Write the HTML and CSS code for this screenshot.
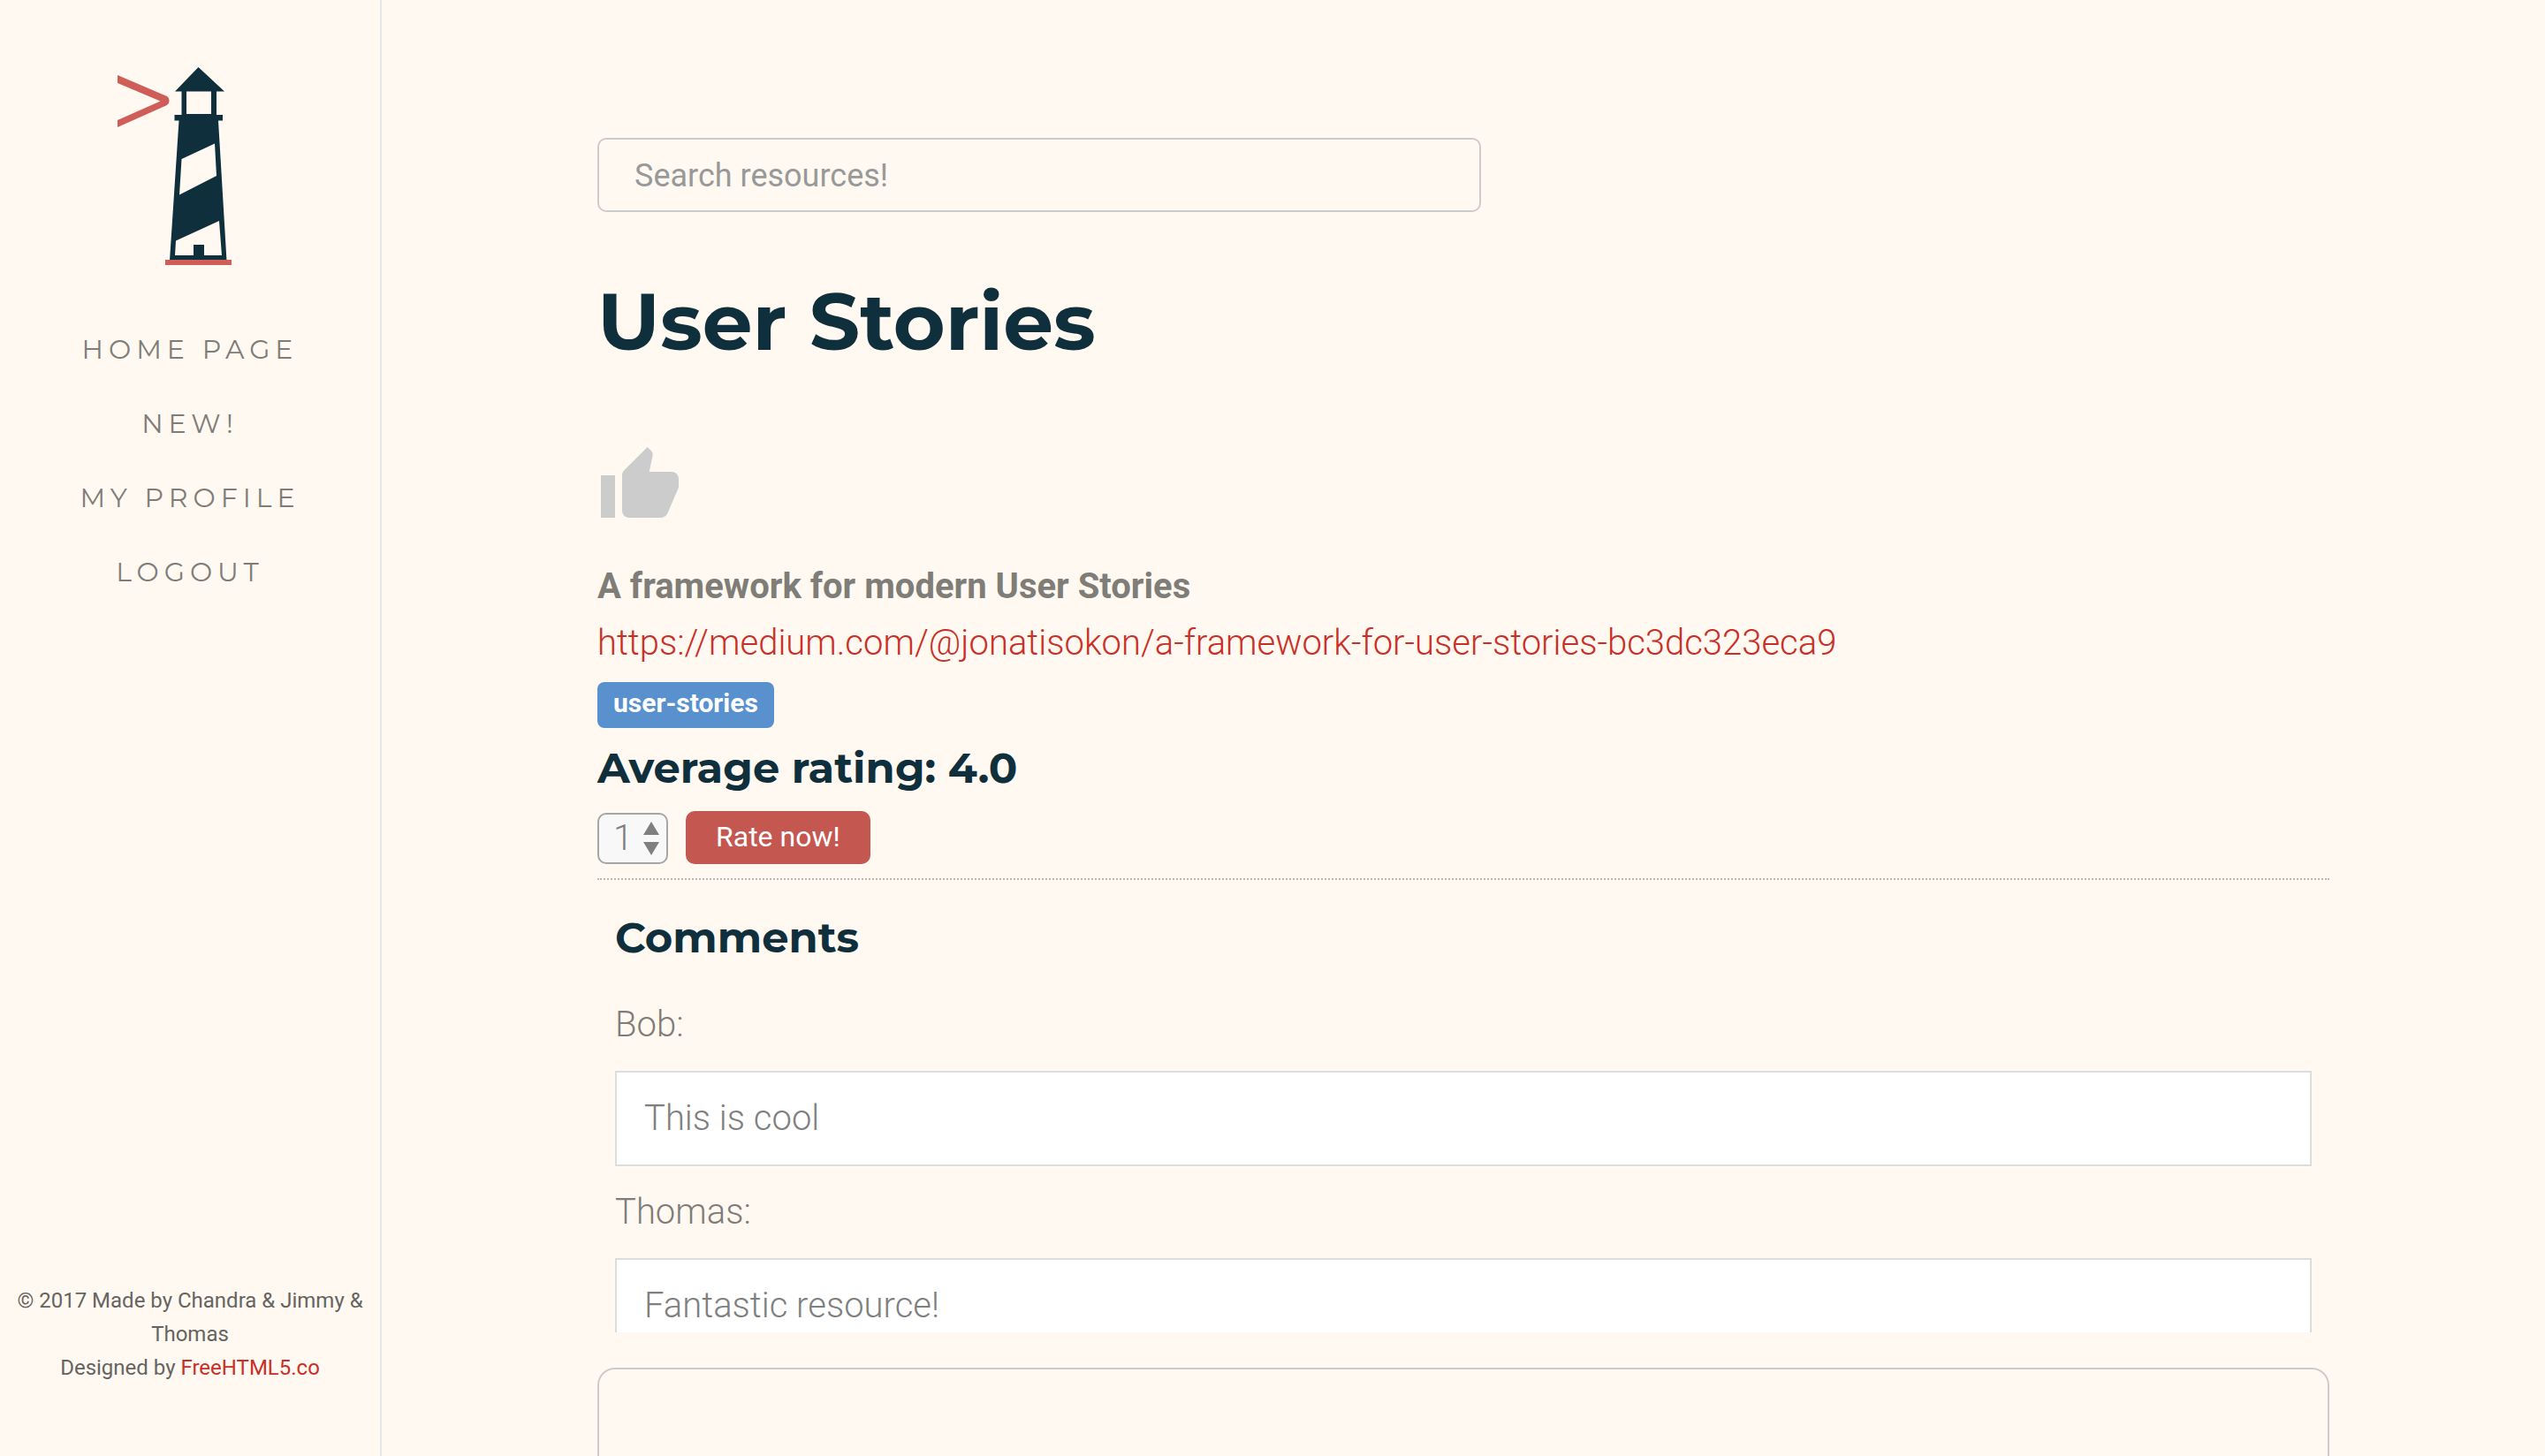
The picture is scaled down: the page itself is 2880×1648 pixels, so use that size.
FILE: index.html
```
<!DOCTYPE html>
<html lang="en">
<head>
<meta charset="utf-8">
<title>User Stories</title>
<link rel="stylesheet" href="styles.css">
</head>
<body>
<div class="page">
  <aside class="sidebar">
    <a class="logo" href="#" aria-label="Home">
      <svg viewBox="0 0 144 236" width="144" height="236" aria-hidden="true">
        <path fill="#cf5d58" d="M5 10 61 34Q63.500 35.500 63.500 39T61 44L5 69V61L53.500 39.500 5 19Z"/>
        <path fill="#0f2f3c" fill-rule="evenodd" d="M96.500 1 126 28.500H117V55h7v6.500h-5L128.500 220H64L74.500 61.500h-5V55h8V28.500H70ZM83 28.500V54h28V28.500ZM115 87.500 77.500 105 75 145.500 117 124ZM120 175 71 197.500 70 214H91V202h12v12h20Z"/>
        <path fill="#cf5d58" d="M59 219h75v6H59z"/>
      </svg>
    </a>
    <nav>
      <ul class="menu">
        <li><a href="#">Home page</a></li>
        <li><a href="#">New!</a></li>
        <li><a href="#">My profile</a></li>
        <li><a href="#">Logout</a></li>
      </ul>
    </nav>
    <footer class="credits">
      <p>© 2017 Made by Chandra &amp; Jimmy &amp; Thomas</p>
      <p>Designed by <a href="#">FreeHTML5.co</a></p>
    </footer>
  </aside>
  <main class="main">
    <form class="search"><input type="text" class="search-box" placeholder="Search resources!" aria-label="Search resources"></form>
    <h1>User Stories</h1>
    <button type="button" class="like" aria-label="Like">
      <svg viewBox="0 0 24 24" width="96" height="96" aria-hidden="true"><path fill="#ccc" d="M1 21h4V9H1v12zm22-11c0-1.100-.9-2-2-2h-6.310l.95-4.570.03-.32c0-.41-.17-.79-.44-1.060L14.170 1 7.590 7.590C7.220 7.950 7 8.450 7 9v10c0 1.100.9 2 2 2h9c.83 0 1.540-.5 1.840-1.220l3.020-7.050c.09-.23.14-.47.14-.73v-2z"/></svg>
    </button>
    <p class="title">A framework for modern User Stories</p>
    <p class="url"><a href="#">https://medium.com/@jonatisokon/a-framework-for-user-stories-bc3dc323eca9</a></p>
    <div class="tags"><span class="tag">user-stories</span></div>
    <h2>Average rating: 4.0</h2>
    <form class="rating">
      <span class="picker">
        <select class="score" aria-label="Rating"><option>1</option><option>2</option><option>3</option><option>4</option><option>5</option></select>
        <svg class="arrows" viewBox="0 0 18 38" width="18" height="38" aria-hidden="true"><path fill="#7f7f7f" d="M9 0 18 15H0zM0 23h18L9 38z"/></svg>
      </span>
      <button type="button" class="rate">Rate now!</button>
    </form>
    <section class="comments">
      <h2>Comments</h2>
      <article class="comment"><p class="author">Bob:</p><p class="text">This is cool</p></article>
      <article class="comment"><p class="author">Thomas:</p><p class="text">Fantastic resource!</p></article>
    </section>
    <textarea class="reply" aria-label="Add a comment"></textarea>
  </main>
</div>
</body>
</html>
```
FILE: styles.css
```
* { box-sizing: border-box; }
body {
  margin: 0;
  background: #fff9f1;
  color: #7f7d78;
  font: 300 40px/64px Roboto, sans-serif;
}
p, h1, h2, ul { margin: 0; padding: 0; }
a { color: #c92f27; text-decoration: none; }
button, input, select, textarea { font-family: inherit; margin: 0; }

.page { display: flex; height: 100vh; }

.sidebar {
  flex: 0 0 15%;
  display: flex;
  flex-direction: column;
  align-items: center;
  padding: 75px 16px 81px;
  border-right: 2px solid #e6e6e6;
}
.logo { display: block; height: 236px; margin-right: 30px; }
.logo svg { display: block; }
.menu { list-style: none; margin-top: 40px; text-align: center; }
.menu li { height: 84px; line-height: 84px; }
.menu a {
  color: #7f7d78;
  font-family: Montserrat, Inter, sans-serif;
  font-size: 30px;
  font-weight: 400;
  letter-spacing: 6px;
  text-transform: uppercase;
}
.credits {
  margin-top: auto;
  text-align: center;
  color: #666461;
  font-size: 24px;
  font-weight: 400;
  line-height: 38px;
}

.main {
  flex: 1;
  min-width: 0;
  padding: 156px 244px 80px;
  overflow-y: auto;
  scrollbar-width: none;
}
h1, h2 { font-family: Montserrat, Inter, sans-serif; font-weight: 700; color: #0f2f3c; }
h1 { font-size: 90px; line-height: 120px; margin-top: 64px; }
h2 { font-size: 48px; line-height: 64px; }

.search { display: flex; }
.search-box {
  width: 51%;
  height: 84px;
  padding: 2px 40px 0;
  border: 2px solid #ccc;
  border-radius: 10px;
  background: transparent;
  font-size: 36px;
  color: #7f7d78;
}
.search-box::placeholder { color: #999; opacity: 1; }

.like { display: block; margin-top: 78px; padding: 0; border: 0; background: none; }
.like svg { display: block; }
.title { margin-top: 34px; font-weight: 700; }
.tags { display: flex; margin-top: 12px; }
.tag {
  padding: 0 18px 4px;
  border-radius: 8px;
  background: #5891ce;
  color: #fff;
  font-size: 30px;
  font-weight: 700;
  line-height: 48px;
}
.tags + h2 { margin-top: 13px; }

.rating {
  display: flex;
  align-items: flex-end;
  gap: 20px;
  margin-top: 17px;
  padding-bottom: 16px;
  border-bottom: 2px dotted #bbb8b3;
}
.picker { display: grid; width: 80px; height: 58px; align-items: center; }
.score, .arrows { grid-area: 1 / 1; }
.score {
  appearance: none;
  width: 100%;
  height: 100%;
  padding: 0 16px 2px;
  border: 2px solid #a6a6a6;
  border-radius: 10px;
  background: #f8f8f8;
  color: #7f7f7f;
  font-size: 40px;
  font-weight: 300;
}
.arrows { justify-self: end; margin-right: 10px; pointer-events: none; }
.rate {
  height: 60px;
  padding: 0 34px 3px;
  border: 0;
  border-radius: 10px;
  background: #c45850;
  color: #fff;
  font-size: 32px;
  font-weight: 400;
}

.comments { height: 512px; padding: 33px 20px 0; overflow-y: auto; scrollbar-width: none; }
.comment { margin-top: 35px; }
.comment + .comment { margin-top: 20px; }
.author { margin-bottom: 20px; }
.text { height: 108px; padding: 20px 31px; border: 2px solid #ddd; background: #fff; color: #7f7f7f; }
.reply {
  display: block;
  width: 100%;
  height: 300px;
  margin-top: 40px;
  padding: 20px;
  border: 2px solid #ccc;
  border-radius: 20px;
  background: transparent;
  font-size: 40px;
  resize: none;
}
```
